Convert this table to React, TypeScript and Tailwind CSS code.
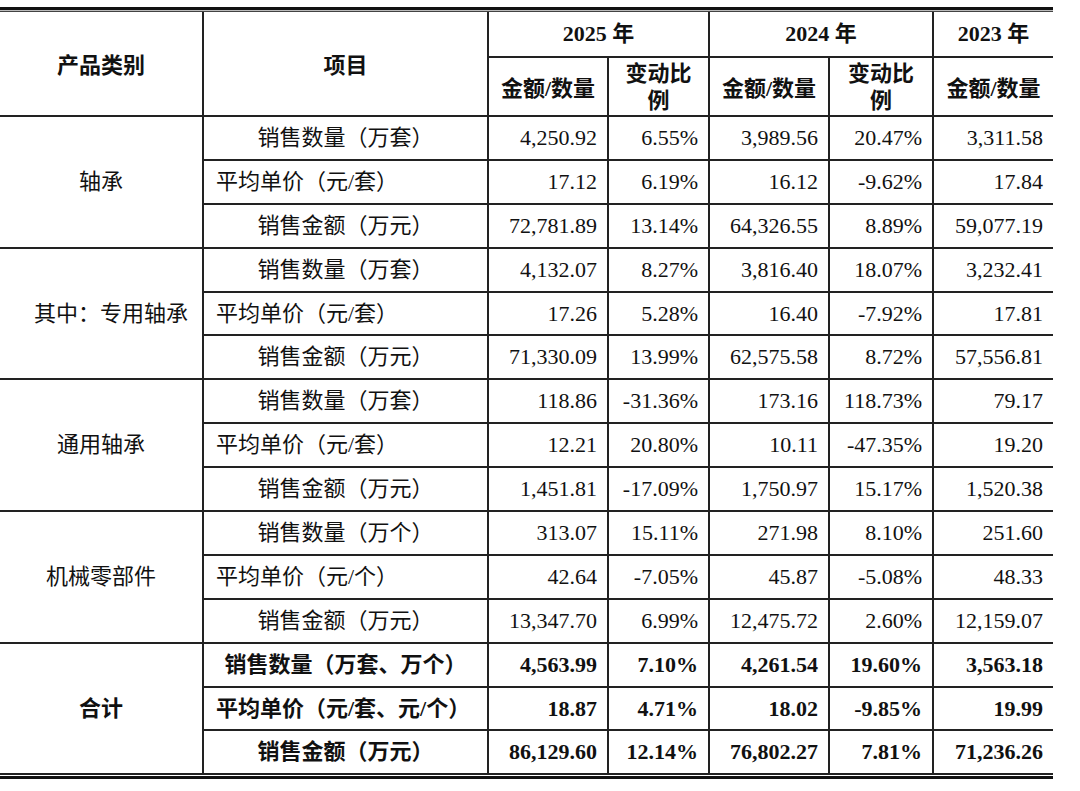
import React from 'react'

type Row = {
  item: string
  align: 'center' | 'left'
  vals: string[]
}

interface Group {
  cat: string
  bold?: boolean
  indent?: boolean
  rows: Row[]
}

const groups: Group[] = [
  {
    cat: '轴承',
    rows: [
      { item: '销售数量（万套）', align: 'center', vals: ['4,250.92', '6.55%', '3,989.56', '20.47%', '3,311.58'] },
      { item: '平均单价（元/套）', align: 'left', vals: ['17.12', '6.19%', '16.12', '-9.62%', '17.84'] },
      { item: '销售金额（万元）', align: 'center', vals: ['72,781.89', '13.14%', '64,326.55', '8.89%', '59,077.19'] }
    ]
  },
  {
    cat: '其中：专用轴承',
    indent: true,
    rows: [
      { item: '销售数量（万套）', align: 'center', vals: ['4,132.07', '8.27%', '3,816.40', '18.07%', '3,232.41'] },
      { item: '平均单价（元/套）', align: 'left', vals: ['17.26', '5.28%', '16.40', '-7.92%', '17.81'] },
      { item: '销售金额（万元）', align: 'center', vals: ['71,330.09', '13.99%', '62,575.58', '8.72%', '57,556.81'] }
    ]
  },
  {
    cat: '通用轴承',
    rows: [
      { item: '销售数量（万套）', align: 'center', vals: ['118.86', '-31.36%', '173.16', '118.73%', '79.17'] },
      { item: '平均单价（元/套）', align: 'left', vals: ['12.21', '20.80%', '10.11', '-47.35%', '19.20'] },
      { item: '销售金额（万元）', align: 'center', vals: ['1,451.81', '-17.09%', '1,750.97', '15.17%', '1,520.38'] }
    ]
  },
  {
    cat: '机械零部件',
    rows: [
      { item: '销售数量（万个）', align: 'center', vals: ['313.07', '15.11%', '271.98', '8.10%', '251.60'] },
      { item: '平均单价（元/个）', align: 'left', vals: ['42.64', '-7.05%', '45.87', '-5.08%', '48.33'] },
      { item: '销售金额（万元）', align: 'center', vals: ['13,347.70', '6.99%', '12,475.72', '2.60%', '12,159.07'] }
    ]
  },
  {
    cat: '合计',
    bold: true,
    rows: [
      { item: '销售数量（万套、万个）', align: 'center', vals: ['4,563.99', '7.10%', '4,261.54', '19.60%', '3,563.18'] },
      { item: '平均单价（元/套、元/个）', align: 'left', vals: ['18.87', '4.71%', '18.02', '-9.85%', '19.99'] },
      { item: '销售金额（万元）', align: 'center', vals: ['86,129.60', '12.14%', '76,802.27', '7.81%', '71,236.26'] }
    ]
  }
]

const font = { fontFamily: '"Liberation Serif", "Noto Sans CJK SC", serif' }

export default function App() {
  return (
    <div className="min-h-[791px] w-[1080px] bg-white text-[22px] leading-[26px] text-[#111]" style={font}>
      <div className="w-[1053px] pt-[7px]">
        {/* 顶部粗线 */}
        <div className="h-[3px] bg-[#111]" />
        <div className="h-[1px] bg-[#bbb]" />
        <div className="h-[1px] bg-[#444]" />

        <table className="w-[1053px] table-fixed border-collapse">
          <colgroup>
            <col className="w-[203px]" />
            <col className="w-[285px]" />
            <col className="w-[120px]" />
            <col className="w-[101px]" />
            <col className="w-[120px]" />
            <col className="w-[104px]" />
            <col className="w-[120px]" />
          </colgroup>
          <thead>
            <tr className="h-[45px] font-bold">
              <th rowSpan={2} className="border-b-2 border-[#222] pt-[4px] text-center align-middle">
                产品类别
              </th>
              <th rowSpan={2} className="border-b-2 border-l-2 border-[#222] pt-[4px] text-center align-middle">
                项目
              </th>
              <th colSpan={2} className="border-b-2 border-l-2 border-[#222] text-center">
                2025 年
              </th>
              <th colSpan={2} className="border-b-2 border-l-2 border-[#222] text-center">
                2024 年
              </th>
              <th className="border-b-2 border-l-2 border-[#222] text-center">2023 年</th>
            </tr>
            <tr className="h-[59px] font-bold">
              <th className="border-b-2 border-l-2 border-[#222] px-0 pt-[4px] text-center">金额/数量</th>
              <th className="border-b-2 border-l-2 border-[#222] text-center leading-[27px]">
                变动比
                <br />例
              </th>
              <th className="border-b-2 border-l-2 border-[#222] px-0 pt-[4px] text-center">金额/数量</th>
              <th className="border-b-2 border-l-2 border-[#222] text-center leading-[27px]">
                变动比
                <br />例
              </th>
              <th className="border-b-2 border-l-2 border-[#222] px-0 pt-[4px] text-center">金额/数量</th>
            </tr>
          </thead>
          <tbody>
            {groups.map((g) =>
              g.rows.map((r, i) => (
                <tr key={g.cat + i} className={`h-[43.9px] ${g.bold ? 'font-bold' : 'font-normal'}`}>
                  {i === 0 && (
                    <td
                      rowSpan={3}
                      className={`border-b-2 border-[#222] text-center align-middle whitespace-nowrap ${
                        g.indent ? 'pl-[20px]' : ''
                      }`}
                    >
                      {g.cat}
                    </td>
                  )}
                  <td
                    className={`border-b-2 border-l-2 border-[#222] whitespace-nowrap ${
                      r.align === 'left' ? 'pl-[12px] text-left' : 'text-center'
                    }`}
                  >
                    {r.item}
                  </td>
                  {r.vals.map((v, j) => (
                    <td key={j} className="border-b-2 border-l-2 border-[#222] pr-[10px] text-right whitespace-nowrap">
                      {v}
                    </td>
                  ))}
                </tr>
              ))
            )}
          </tbody>
        </table>

        {/* 底部双线 */}
        <div className="mt-[1px] h-[3px] bg-[#111]" />
      </div>
    </div>
  )
}
